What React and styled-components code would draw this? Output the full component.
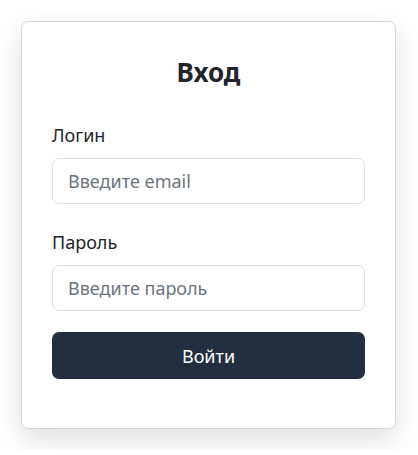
import React from "react";
import styled, { createGlobalStyle } from "styled-components";

const GlobalStyle = createGlobalStyle`
  * { box-sizing: border-box; }
  body {
    margin: 0;
    background: #ffffff;
    font-family: "Noto Sans", "Open Sans", sans-serif;
    color: #212529;
  }
`;

const Page = styled.div`
  padding: 21px;
`;

const Card = styled.form`
  width: 375px;
  background: #fff;
  border: 1px solid #d6d6d6;
  border-radius: 7px;
  box-shadow: 0 10px 28px rgba(0, 0, 0, 0.13);
  padding: 30px 30px 49px;
  display: flex;
  flex-direction: column;
`;

const Title = styled.h2`
  margin: 0 0 30px;
  text-align: center;
  font-size: 26px;
  font-weight: 700;
  line-height: 40px;
  color: #212529;
`;

const Field = styled.div`
  display: flex;
  flex-direction: column;
  margin-bottom: ${(p) => p.$gap}px;
`;

const Label = styled.label`
  font-size: 18px;
  line-height: 26px;
  margin-bottom: 10px;
`;

const Input = styled.input`
  height: 46px;
  border: 1px solid #dee2e6;
  border-radius: 7px;
  padding: 0 15px;
  font-family: inherit;
  font-size: 18px;
  color: #212529;
  &::placeholder { color: #6c757d; }
`;

const Submit = styled.button`
  height: 47px;
  border: none;
  border-radius: 7px;
  background: #232f3e;
  color: #fff;
  font-family: inherit;
  font-size: 18px;
  cursor: pointer;
`;

export default function App() {
  return (
    <Page>
      <GlobalStyle />
      <Card onSubmit={(e) => e.preventDefault()}>
        <Title>Вход</Title>
        <Field $gap={25}>
          <Label>Логин</Label>
          <Input type="email" placeholder="Введите email" />
        </Field>
        <Field $gap={21}>
          <Label>Пароль</Label>
          <Input type="password" placeholder="Введите пароль" />
        </Field>
        <Submit type="submit">Войти</Submit>
      </Card>
    </Page>
  );
}
